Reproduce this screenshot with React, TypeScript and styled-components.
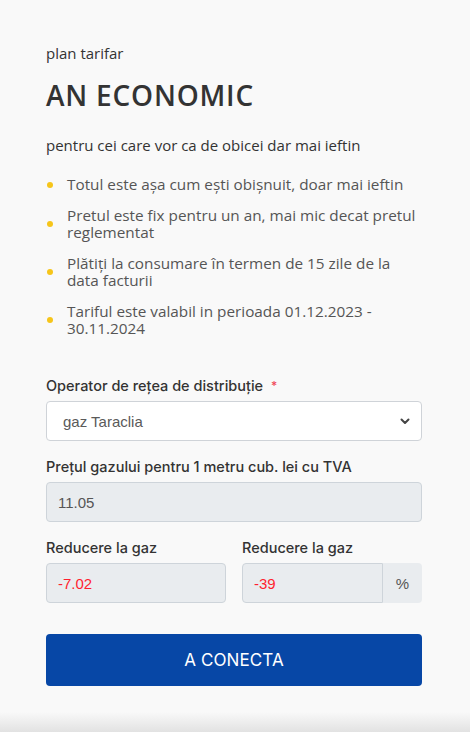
import React from "react"
import styled, { createGlobalStyle } from "styled-components"

const GlobalStyle = createGlobalStyle`
  html, body {
    margin: 0;
    padding: 0;
    background: #f9f9f9;
  }
  * {
    box-sizing: border-box;
  }
`

const Page = styled.div`
  position: relative;
  width: 470px;
  height: 732px;
  overflow: hidden;
  background: #f9f9f9;
`
const Card = styled.div`
  display: flex;
  flex-direction: column;
  padding: 44px 48px 0 46px;
`
const Kicker = styled.p`
  margin: 0;
  font-family: "Open Sans", sans-serif;
  font-size: 15px;
  line-height: 18px;
  color: #333;
`
const Title = styled.h1`
  margin: 17px 0 0;
  font-family: "Open Sans", sans-serif;
  font-weight: 600;
  font-size: 28px;
  line-height: 32px;
  letter-spacing: 0.8px;
  color: #333;
`
const Subtitle = styled.p`
  margin: 25px 0 0;
  font-family: "Open Sans", sans-serif;
  font-size: 15px;
  line-height: 18px;
  color: #333;
`
const List = styled.ul`
  list-style: none;
  margin: 22px 0 0;
  padding: 0 3px 0 0;
  display: flex;
  flex-direction: column;
  gap: 14px;
`
const Item = styled.li`
  display: flex;
  align-items: center;
  gap: 14px;
  padding-left: 1px;
  font-family: "Open Sans", sans-serif;
  font-size: 15.3px;
  line-height: 17px;
  color: #555;
`
const Dot = styled.span`
  flex: none;
  width: 6px;
  height: 6px;
  border-radius: 50%;
  background: #f6c51a;
`
const Form = styled.div`
  display: flex;
  flex-direction: column;
  margin-top: 40px;
`
const Field = styled.div`
  display: flex;
  flex-direction: column;
  margin-bottom: 17px;
  min-width: 0;
`
const Label = styled.label`
  font-family: Inter, "Liberation Sans", sans-serif;
  font-size: 14.5px;
  font-weight: 500;
  line-height: 18px;
  color: #333;
  margin-bottom: 6px;
`
const Required = styled.span`
  color: #f04a5a;
  font-size: 12px;
  vertical-align: top;
  margin-left: 8px;
`
const SelectBox = styled.div`
  display: flex;
  align-items: center;
  justify-content: space-between;
  height: 40px;
  padding: 0 10px 0 16px;
  background: #fff;
  border: 1px solid #cfd3d8;
  border-radius: 4px;
  font-family: "Liberation Sans", sans-serif;
  font-size: 15px;
  color: #5a5a5a;
`
const Input = styled.div<{ $danger?: boolean; $joined?: boolean }>`
  width: 100%;
  display: flex;
  align-items: center;
  height: 40px;
  padding: 0 11px;
  background: #e9ecef;
  border: 1px solid #ced4da;
  border-radius: ${({ $joined }) => ($joined ? "4px 0 0 4px" : "4px")};
  font-family: "Liberation Sans", sans-serif;
  font-size: 15px;
  color: ${({ $danger }) => ($danger ? "#ff1f2f" : "#555")};
`
const Group = styled.div`
  display: flex;
`
const Addon = styled.div`
  flex: none;
  display: flex;
  align-items: center;
  justify-content: center;
  width: 39px;
  height: 40px;
  background: #e9ecef;
  border-radius: 0 4px 4px 0;
  font-family: "Liberation Sans", sans-serif;
  font-size: 15px;
  color: #555;
`
const Row = styled.div`
  display: grid;
  grid-template-columns: 180px 1fr;
  column-gap: 16px;
`
const Button = styled.button`
  margin-top: 14px;
  height: 52px;
  border: none;
  border-radius: 4px;
  background: #0747a6;
  color: #fff;
  font-family: Inter, "Liberation Sans", sans-serif;
  font-size: 17px;
  font-weight: 400;
  letter-spacing: 0.1px;
`
const BottomShade = styled.div`
  position: absolute;
  left: 0;
  right: 0;
  bottom: 0;
  height: 20px;
  background: linear-gradient(#f9f9f9, #e2e2e2);
`

const bullets = [
  "Totul este așa cum ești obișnuit, doar mai ieftin",
  "Pretul este fix pentru un an, mai mic decat pretul reglementat",
  "Plătiți la consumare în termen de 15 zile de la data facturii",
  "Tariful este valabil in perioada 01.12.2023 - 30.11.2024",
]

const Chevron = () => (
  <svg width="12" height="12" viewBox="0 0 12 12">
    <path d="M2.5 4.5 L6 8 L9.5 4.5" fill="none" stroke="#444" strokeWidth="2" strokeLinecap="round" strokeLinejoin="round" />
  </svg>
)

const App = () => (
  <Page>
    <GlobalStyle />
    <Card>
      <Kicker>plan tarifar</Kicker>
      <Title>AN ECONOMIC</Title>
      <Subtitle>pentru cei care vor ca de obicei dar mai ieftin</Subtitle>
      <List>
        {bullets.map((text, i) => (
          <Item key={i}>
            <Dot />
            <span>{text}</span>
          </Item>
        ))}
      </List>
      <Form>
        <Field>
          <Label>
            Operator de rețea de distribuție<Required>*</Required>
          </Label>
          <SelectBox>
            gaz Taraclia
            <Chevron />
          </SelectBox>
        </Field>
        <Field>
          <Label>Prețul gazului pentru 1 metru cub. lei cu TVA</Label>
          <Input>11.05</Input>
        </Field>
        <Row>
          <Field>
            <Label>Reducere la gaz</Label>
            <Input $danger>-7.02</Input>
          </Field>
          <Field>
            <Label>Reducere la gaz</Label>
            <Group>
              <Input $danger $joined>-39</Input>
              <Addon>%</Addon>
            </Group>
          </Field>
        </Row>
        <Button>A CONECTA</Button>
      </Form>
    </Card>
    <BottomShade />
  </Page>
)

export default App
